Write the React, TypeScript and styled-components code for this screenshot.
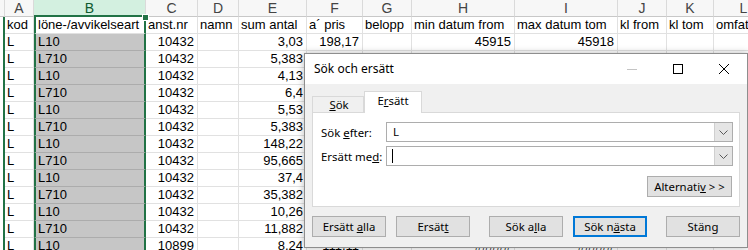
import React from 'react'
import styled, { createGlobalStyle } from 'styled-components'

const GlobalStyle = createGlobalStyle`
    html, body {
        margin: 0;
        padding: 0;
        background: #ffffff;
        overflow: hidden;
    }
`

const COLS = [5, 29, 112, 52, 41, 68, 56, 49, 103, 103, 49, 47, 60]
const LETTERS = ['', 'A', 'B', 'C', 'D', 'E', 'F', 'G', 'H', 'I', 'J', 'K', 'L']
const TITLES = ['kod', 'löne-/avvikelseart', 'anst.nr', 'namn', 'sum antal', 'a´ pris', 'belopp', 'min datum from', 'max datum tom', 'kl from', 'kl tom', 'omfattning']
const NUMERIC = [false, false, true, false, true, true, true, true, true, false, false, false]

const ROWS: string[][] = [
    ['L', 'L10', '10432', '', '3,03', '198,17', '', '45915', '45918', '', '', ''],
    ['L', 'L710', '10432', '', '5,383', '198,17', '', '45915', '45918', '', '', ''],
    ['L', 'L10', '10432', '', '4,13', '198,17', '', '45915', '45918', '', '', ''],
    ['L', 'L710', '10432', '', '6,4', '198,17', '', '45915', '45918', '', '', ''],
    ['L', 'L10', '10432', '', '5,53', '198,17', '', '45915', '45918', '', '', ''],
    ['L', 'L710', '10432', '', '5,383', '198,17', '', '45915', '45918', '', '', ''],
    ['L', 'L10', '10432', '', '148,22', '198,17', '', '45915', '45918', '', '', ''],
    ['L', 'L710', '10432', '', '95,665', '198,17', '', '45915', '45918', '', '', ''],
    ['L', 'L10', '10432', '', '37,4', '198,17', '', '45915', '45918', '', '', ''],
    ['L', 'L710', '10432', '', '35,382', '198,17', '', '45915', '45918', '', '', ''],
    ['L', 'L10', '10432', '', '10,26', '198,17', '', '45915', '45918', '', '', ''],
    ['L', 'L710', '10432', '', '11,882', '198,17', '', '45915', '45918', '', '', ''],
    ['L', 'L10', '10899', '', '8,24', '111,11', '', '#####', '#####', '', '', ''],
]

const Sheet = styled.div`
    position: relative;
    width: 748px;
    height: 250px;
    overflow: hidden;
    font-family: "Liberation Sans", Arial, sans-serif;
    font-size: 13px;
    color: #000;
`
const Grid = styled.div`
    display: grid;
    grid-template-columns: ${COLS.map(c => c + 'px').join(' ')};
    grid-auto-rows: 17px;
    width: max-content;
`
const HeadCell = styled.div<{ $active?: boolean }>`
    box-sizing: border-box;
    background: ${p => p.$active ? '#d3f0e0' : '#f7f7f7'};
    border-right: 1px solid #dadada;
    border-bottom: ${p => p.$active ? '2px solid #217346' : '1px solid #c8c8c8'};
    color: ${p => p.$active ? '#0e5a2e' : '#444'};
    font-size: 14px;
    line-height: 16px;
    text-align: center;
`
const Gutter = styled.div`
    box-sizing: border-box;
    border-right: 2px solid #217346;
`
const Cell = styled.div<{ $num?: boolean; $sel?: boolean; $white?: boolean }>`
    box-sizing: border-box;
    padding: 0 3px 0 2px;
    line-height: 16px;
    white-space: nowrap;
    overflow: hidden;
    text-align: ${p => p.$num ? 'right' : 'left'};
    background: ${p => p.$sel && !p.$white ? '#c6c6c6' : '#fff'};
    border-bottom: 1px solid ${p => p.$sel && !p.$white ? '#acacac' : '#e1e1e1'};
    border-right: ${p => p.$sel ? '2px solid #217346' : '1px solid #e1e1e1'};
    border-left: ${p => p.$sel ? '2px solid #217346' : 'none'};
`
const FillHandle = styled.div`
    position: absolute;
    left: 142px;
    top: 14px;
    width: 5px;
    height: 5px;
    background: #217346;
    border: 1px solid #fff;
`

/* dialog */
const Dialog = styled.div`
    position: absolute;
    left: 304px;
    top: 53px;
    width: 444px;
    height: 195px;
    box-sizing: border-box;
    border: 1px solid #8e8e8e;
    box-shadow: 0 0 7px rgba(0, 0, 0, 0.28);
    background: #f0f0f0;
    display: flex;
    flex-direction: column;
    font-family: "Noto Sans", "Open Sans", sans-serif;
    font-size: 11.4px;
    color: #000;
`
const TitleBar = styled.div`
    height: 30px;
    background: #fff;
    display: flex;
    align-items: center;
    padding-left: 9px;
`
const Title = styled.div`
    flex: 1;
    font-size: 12px;
    line-height: 16px;
`
const WinButton = styled.div`
    width: 46px;
    height: 30px;
    display: flex;
    align-items: center;
    justify-content: center;
`
const Body = styled.div`
    padding: 8px 7px 0 7px;
    display: flex;
    flex-direction: column;
`
const Tabs = styled.div`
    display: flex;
    align-items: flex-end;
    height: 21px;
    margin-bottom: -1px;
    position: relative;
    z-index: 1;
`
const Tab = styled.div<{ $active?: boolean; $w: number }>`
    box-sizing: border-box;
    width: ${p => p.$w}px;
    height: ${p => p.$active ? 22 : 17}px;
    background: ${p => p.$active ? '#fff' : '#f0f0f0'};
    border: 1px solid #d9d9d9;
    border-bottom: ${p => p.$active ? 'none' : '1px solid #d9d9d9'};
    text-align: center;
    line-height: ${p => p.$active ? 18 : 16}px;
    padding-left: ${p => p.$active ? 0 : 2}px;
`
const Panel = styled.div`
    box-sizing: border-box;
    height: 95px;
    background: #fff;
    border: 1px solid #d9d9d9;
    padding: 9px 6px 0 8px;
    display: flex;
    flex-direction: column;
    gap: 4px;
`
const FieldRow = styled.div`
    display: flex;
    align-items: center;
    height: 20px;
`
const FieldLabel = styled.div`
    width: 65px;
`
const Combo = styled.div`
    flex: 1;
    box-sizing: border-box;
    height: 20px;
    border: 1px solid #adadad;
    display: flex;
    align-items: center;
    background: #fff;
`
const ComboText = styled.div`
    flex: 1;
    padding-left: 6px;
    line-height: 16px;
    display: flex;
    align-items: center;
`
const Caret = styled.div`
    width: 1px;
    height: 14px;
    background: #000;
    margin-left: -1px;
`
const ComboArrow = styled.div`
    width: 17px;
    height: 18px;
    background: #e5e5e5;
    border-left: 1px solid #cfcfcf;
    display: flex;
    align-items: center;
    justify-content: center;
`
const OptionsRow = styled.div`
    display: flex;
    justify-content: flex-end;
    margin-top: 6px;
    padding-right: 1px;
`
const Button = styled.div<{ $default?: boolean; $w?: number }>`
    box-sizing: border-box;
    width: ${p => p.$w || 74}px;
    height: 21px;
    background: #e1e1e1;
    border: ${p => p.$default ? '2px solid #0078d7' : '1px solid #adadad'};
    display: flex;
    align-items: center;
    justify-content: center;
    line-height: 16px;
    white-space: pre;
`
const ButtonRow = styled.div`
    display: flex;
    margin-top: 9px;
`
const Spacer = styled.div<{ $w: number }>`
    width: ${p => p.$w}px;
    flex: none;
`

const Chevron = () => (
    <svg width="9" height="5" viewBox="0 0 9 5">
        <path d="M0.5 0.5 L4.5 4.5 L8.5 0.5" fill="none" stroke="#5a5a5a" strokeWidth="1" />
    </svg>
)

const App = () => {
    return (
        <Sheet>
            <GlobalStyle />
            <Grid>
                {LETTERS.map((l, i) => (
                    <HeadCell key={'h' + i} $active={l === 'B'}>{l}</HeadCell>
                ))}
                <Gutter />
                {TITLES.map((t, i) => (
                    <Cell key={'t' + i} $sel={i === 1} $white={i === 1}>{t}</Cell>
                ))}
                {ROWS.map((row, r) => (
                    <React.Fragment key={r}>
                        <Gutter />
                        {row.map((v, i) => (
                            <Cell key={i} $num={NUMERIC[i]} $sel={i === 1}>{v}</Cell>
                        ))}
                    </React.Fragment>
                ))}
            </Grid>
            <FillHandle />

            <Dialog>
                <TitleBar>
                    <Title>Sök och ersätt</Title>
                    <WinButton>
                        <svg width="10" height="10" viewBox="0 0 10 10">
                            <path d="M0 5.5 H10" stroke="#c4c4c4" strokeWidth="1" />
                        </svg>
                    </WinButton>
                    <WinButton>
                        <svg width="10" height="10" viewBox="0 0 10 10">
                            <rect x="0.5" y="0.5" width="9" height="9" fill="none" stroke="#000" strokeWidth="1" />
                        </svg>
                    </WinButton>
                    <WinButton>
                        <svg width="10" height="10" viewBox="0 0 10 10">
                            <path d="M0 0 L10 10 M10 0 L0 10" stroke="#000" strokeWidth="1" />
                        </svg>
                    </WinButton>
                </TitleBar>
                <Body>
                    <Tabs>
                        <Tab $w={52}><u>S</u>ök</Tab>
                        <Tab $w={58} $active>E<u>r</u>sätt</Tab>
                    </Tabs>
                    <Panel>
                        <FieldRow>
                            <FieldLabel>Sök <u>e</u>fter:</FieldLabel>
                            <Combo>
                                <ComboText>L</ComboText>
                                <ComboArrow><Chevron /></ComboArrow>
                            </Combo>
                        </FieldRow>
                        <FieldRow>
                            <FieldLabel>Ersätt me<u>d</u>:</FieldLabel>
                            <Combo>
                                <ComboText><Caret /></ComboText>
                                <ComboArrow><Chevron /></ComboArrow>
                            </Combo>
                        </FieldRow>
                        <OptionsRow>
                            <Button $w={85}><span>Alternati<u>v</u> &gt; &gt;</span></Button>
                        </OptionsRow>
                    </Panel>
                    <ButtonRow>
                        <Button><span>Ersätt <u>a</u>lla</span></Button>
                        <Spacer $w={10} />
                        <Button><span>Ersät<u>t</u></span></Button>
                        <Spacer $w={19} />
                        <Button><span>Sök a<u>l</u>la</span></Button>
                        <Spacer $w={10} />
                        <Button $default><span>Sök n<u>ä</u>sta</span></Button>
                        <Spacer $w={19} />
                        <Button><span>Stäng</span></Button>
                    </ButtonRow>
                </Body>
            </Dialog>
        </Sheet>
    )
}

export default App
